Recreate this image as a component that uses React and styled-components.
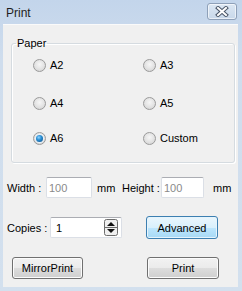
import React from "react";
import styled, { createGlobalStyle, css } from "styled-components";

const Global = createGlobalStyle`
  html, body { margin: 0; padding: 0; background: #cbdaec; }
  body { font-family: "Liberation Sans", Arial, sans-serif; font-size: 11px; color: #000; }
  #root { width: 242px; height: 291px; }
`;

const Window = styled.div`
  width: 242px;
  height: 291px;
  box-sizing: border-box;
  display: flex;
  flex-direction: column;
  background: linear-gradient(#c3d5eb, #cfdded 60px, #d3e0ee);
  padding: 0 4px 4px 3px;
`;

const TitleBar = styled.div`
  height: 24px;
  flex: none;
  display: flex;
  align-items: flex-start;
  justify-content: space-between;
`;

const Title = styled.span`
  font-size: 12px;
  margin: 6px 0 0 3px;
  color: #1e1e1e;
`;

const CloseButton = styled.button`
  width: 30px;
  height: 17px;
  margin-top: 3px;
  margin-right: 1px;
  padding: 0;
  display: flex;
  align-items: center;
  justify-content: center;
  border: 1px solid #8ea0b8;
  border-radius: 3px;
  background: linear-gradient(#dce7f3, #c8d8ea);
  box-shadow: inset 0 0 0 1px rgba(255, 255, 255, 0.6);
`;

const Client = styled.div`
  flex: 1;
  background: #f0f0f0;
  border-top: 1px solid #fafafa;
  box-sizing: border-box;
  padding: 0 0 0 4px;
  display: flex;
  flex-direction: column;
`;

const Group = styled.fieldset`
  margin: 12px 3px 0 4px;
  padding: 5px 0 14px 21px;
  border: 1px solid #d5dbe0;
  border-radius: 3px;
  box-shadow: inset 1px 1px 0 #fff, 1px 1px 0 #fff;
`;

const Legend = styled.legend`
  padding: 0 1px;
  margin-left: -17px;
  line-height: 13px;
`;

const RadioGrid = styled.div`
  display: grid;
  grid-template-columns: 110px 1fr;
  grid-template-rows: 38px 35px 20px;
`;

const Option = styled.label`
  display: flex;
  align-items: center;
  height: 20px;
  gap: 4px;
`;

const Dot = styled.span`
  width: 13px;
  height: 13px;
  box-sizing: border-box;
  border-radius: 50%;
  border: 1px solid #9a9a9a;
  background: radial-gradient(circle at 50% 40%, #f6f6f6 0, #e6e6e6 45%, #cfcfcf 100%);
  position: relative;
  ${(p) =>
    p.checked &&
    css`
      &::after {
        content: "";
        position: absolute;
        left: 2px;
        top: 2px;
        width: 7px;
        height: 7px;
        border-radius: 50%;
        background: radial-gradient(circle at 40% 35%, #8fd3ff 0, #2a8fd4 40%, #0c4b85 100%);
        box-shadow: 0 0 0 1px #e8f2fa;
      }
    `}
`;

const Row = styled.div`
  display: flex;
  align-items: center;
  height: ${(p) => p.h || 21}px;
  margin-top: ${(p) => p.mt || 0}px;
  padding-left: ${(p) => p.pl || 0}px;
`;

const Label = styled.span`
  width: ${(p) => p.w}px;
  flex: none;
  margin-left: ${(p) => p.ml || 0}px;
`;

const Field = styled.div`
  width: ${(p) => p.w}px;
  height: 21px;
  box-sizing: border-box;
  background: #fff;
  border: 1px solid #dbdfe6;
  border-top-color: #abadb3;
  border-radius: 2px;
  display: flex;
  align-items: center;
  padding: 0 3px 0 ${(p) => p.pad || 2}px;
  color: ${(p) => (p.dim ? "#8a8a8a" : "#000")};
  gap: 4px;
`;

const FieldText = styled.span`
  flex: 1;
`;

const Button = styled.button`
  width: ${(p) => p.w}px;
  height: ${(p) => p.h || 22}px;
  margin-left: ${(p) => p.ml || 0}px;
  flex: none;
  font: inherit;
  color: #000;
  padding: 0;
  border: 1px solid #707070;
  border-radius: 3px;
  background: linear-gradient(#f2f2f2 0, #ebebeb 50%, #dddddd 50%, #cfcfcf 100%);
  box-shadow: inset 0 0 0 1px #fcfcfc;
  ${(p) =>
    p.focused &&
    css`
      border-color: #3c7fb1;
      background: linear-gradient(#eaf6fd 0, #d9f0fc 50%, #bee6fd 50%, #a7d9f5 100%);
      box-shadow: inset 0 0 0 1px #e6f4fc;
    `}
`;

function CloseIcon() {
  return (
    <svg width="14" height="11" viewBox="0 0 14 11">
      <path d="M3 2 L11 9 M11 2 L3 9" stroke="#4a5668" strokeWidth="4" strokeLinecap="square" />
      <path d="M3 2 L11 9 M11 2 L3 9" stroke="#fff" strokeWidth="2" strokeLinecap="square" />
    </svg>
  );
}

function SpinIcon() {
  return (
    <svg width="14" height="17" viewBox="0 0 14 17">
      <rect x="0.5" y="0.5" width="13" height="16" rx="2" fill="#f0f0f0" stroke="#6d6d6d" />
      <line x1="1" y1="8.5" x2="13" y2="8.5" stroke="#6d6d6d" />
      <path d="M3 7 L7 3 L11 7 Z" fill="#111" />
      <path d="M3 10 L7 14 L11 10 Z" fill="#111" />
    </svg>
  );
}

const papers = [
  { name: "A2" },
  { name: "A3" },
  { name: "A4" },
  { name: "A5" },
  { name: "A6", checked: true },
  { name: "Custom" },
];

export default function App() {
  return (
    <>
      <Global />
      <Window>
        <TitleBar>
          <Title>Print</Title>
          <CloseButton>
            <CloseIcon />
          </CloseButton>
        </TitleBar>
        <Client>
          <Group>
            <Legend>Paper</Legend>
            <RadioGrid>
              {papers.map((p) => (
                <Option key={p.name}>
                  <Dot checked={p.checked} />
                  {p.name}
                </Option>
              ))}
            </RadioGrid>
          </Group>

          <Row mt={14}>
            <Label w={39}>Width :</Label>
            <Field w={46} dim>100</Field>
            <Label w={25} ml={5}>mm</Label>
            <Label w={39}>Height :</Label>
            <Field w={43} dim>100</Field>
            <Label w={20} ml={9}>mm</Label>
          </Row>

          <Row mt={17} h={25}>
            <Label w={43}>Copies :</Label>
            <Field w={72} pad={5}>
              <FieldText>1</FieldText>
              <SpinIcon />
            </Field>
            <Button w={72} h={23} ml={24} focused>
              Advanced
            </Button>
          </Row>

          <Row mt={17} h={22} pl={5}>
            <Button w={71}>MirrorPrint</Button>
            <Button w={72} ml={64}>Print</Button>
          </Row>
        </Client>
      </Window>
    </>
  );
}
